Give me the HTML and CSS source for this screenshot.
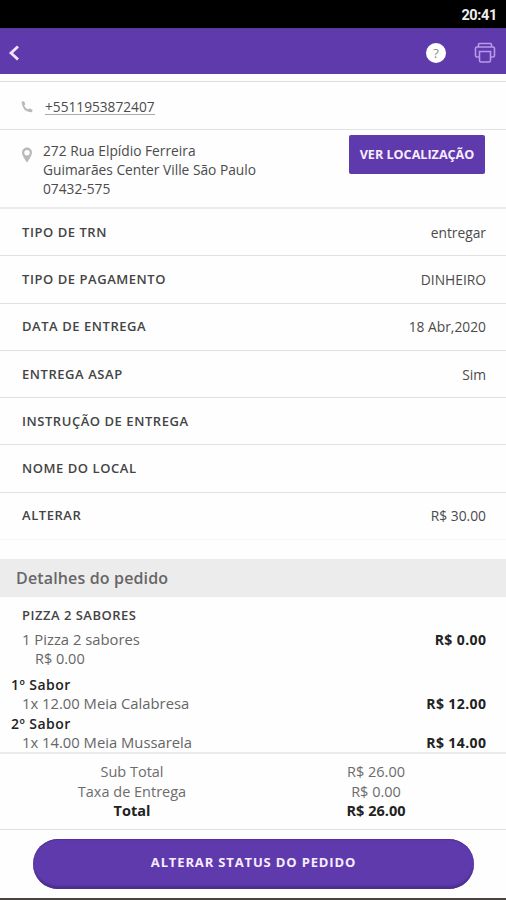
FILE: index.html
```html
<!DOCTYPE html>
<html lang="pt-BR">
<head>
<meta charset="utf-8">
<title>Pedido</title>
<link rel="stylesheet" href="styles.css">
</head>
<body>
<div class="status"><span>20:41</span></div>
<header class="bar">
  <svg class="back" width="13" height="16" viewBox="0 0 13 16"><path d="M11 1.500 4 8l7 6.500"/></svg>
  <div class="actions">
    <span class="help">?</span>
    <svg class="printer" width="22" height="22" viewBox="0 0 22 22"><path d="M4.500 5V2.500Q4.500 1.500 5.500 1.500H16.500Q17.500 1.500 17.500 2.500V5M5.500 15H3Q1.500 15 1.500 13.500V6.500Q1.500 5 3 5H19Q20.500 5 20.500 6.500V13.500Q20.500 15 19 15H16.500M5.500 9.500H16.500V18.500Q16.500 20 15 20H7Q5.500 20 5.500 18.500Z"/></svg>
  </div>
</header>
<div class="gap"></div>
<section class="phone">
  <svg width="12" height="12" viewBox="0 0 12 12"><path d="M.5.8 3 .3l1.400 3-1.300 1.300q1.200 2.600 3.900 4l1.400-1.300 3.200 1.400-.6 2.600Q1.500 11.500.5.800Z"/></svg>
  <a class="number">+5511953872407</a>
</section>
<section class="address">
  <svg width="12" height="16" viewBox="0 0 12 16"><path fill-rule="evenodd" d="M6 .5A5 5 0 0 1 11 5.500C11 9 6 15.500 6 15.500S1 9 1 5.500A5 5 0 0 1 6 .5ZM6 3A2.700 2.700 0 1 0 6 8.400 2.700 2.700 0 1 0 6 3Z"/></svg>
  <div class="lines"><div>272 Rua Elpídio Ferreira</div><div>Guimarães Center Ville São Paulo</div><div>07432-575</div></div>
  <button class="locate">VER LOCALIZAÇÃO</button>
</section>
<dl class="info">
  <div><dt>TIPO DE TRN</dt><dd>entregar</dd></div>
  <div><dt>TIPO DE PAGAMENTO</dt><dd>DINHEIRO</dd></div>
  <div><dt>DATA DE ENTREGA</dt><dd>18 Abr,2020</dd></div>
  <div><dt>ENTREGA ASAP</dt><dd>Sim</dd></div>
  <div><dt>INSTRUÇÃO DE ENTREGA</dt><dd></dd></div>
  <div><dt>NOME DO LOCAL</dt><dd></dd></div>
  <div><dt>ALTERAR</dt><dd>R$ 30.00</dd></div>
</dl>
<h2 class="title">Detalhes do pedido</h2>
<section class="items">
  <h3>PIZZA 2 SABORES</h3>
  <div class="item first"><span>1 Pizza 2 sabores</span><b>R$ 0.00</b></div>
  <div class="unit">R$ 0.00</div>
  <h4>1º Sabor</h4>
  <div class="item"><span>1x 12.00 Meia Calabresa</span><b>R$ 12.00</b></div>
  <h4>2º Sabor</h4>
  <div class="item"><span>1x 14.00 Meia Mussarela</span><b>R$ 14.00</b></div>
</section>
<section class="totals">
  <span>Sub Total</span><span>R$ 26.00</span>
  <span>Taxa de Entrega</span><span>R$ 0.00</span>
  <b>Total</b><b>R$ 26.00</b>
</section>
<footer><button class="change">ALTERAR STATUS DO PEDIDO</button></footer>
</body>
</html>
```

FILE: styles.css
```css
* { box-sizing: border-box; margin: 0; padding: 0; }
body { width: 506px; height: 900px; overflow: hidden; display: flex; flex-direction: column; background: #fefefe; color: #4b4b4b; font: 14px/19px "Open Sans", sans-serif; }
body > * { flex: none; }
button { border: 0; color: #f6edff; font-family: inherit; font-weight: 700; background: #5f3aac; }
.status { height: 28px; padding: 7px 9px 0 0; background: #000; color: #eee; text-align: right; font: 700 14.5px/18px Roboto, sans-serif; letter-spacing: -.35px; }
.bar { height: 46px; padding: 3px 10px 0 7px; display: flex; align-items: center; justify-content: space-between; background: #5f3aac; border-top: 1px solid #54399a; }
.back { fill: none; stroke: #f2e4ff; stroke-width: 2.8; }
.actions { display: flex; align-items: center; gap: 28px; }
.help { width: 20px; height: 20px; border-radius: 50%; background: #fff; color: #8d8995; text-align: center; font-size: 13px; line-height: 20px; }
.printer { fill: none; stroke: #b79be8; stroke-width: 1.6; }
.gap { height: 8px; border-bottom: 1px solid #dfdfda; }
.phone { height: 48px; padding: 3px 0 0 21px; display: flex; align-items: center; gap: 12px; border-bottom: 1px solid #e2e2e2; }
.phone svg, .address svg { fill: #b9b9b9; }
.number { font-size: 13.7px; line-height: 15px; border-bottom: 1px solid #aaa; }
.address { height: 79px; padding: 5px 21px 0; display: flex; border-bottom: 2px solid #ececec; }
.address svg { margin: 12px 10px 0 0; }
.lines { flex: 1; padding-top: 6px; font-size: 13.75px; white-space: nowrap; }
.locate { width: 136px; height: 39px; border-radius: 2px; font-size: 12.6px; white-space: nowrap; }
.info > div { height: 47.3px; padding: 0 20px 0 22px; display: flex; align-items: center; justify-content: space-between; border-bottom: 1px solid #e1e1e1; }
.info > div:last-child { border-color: #f6f6f6; }
dt { font-size: 13px; font-weight: 600; letter-spacing: .55px; color: #444; }
dd { font-size: 13.8px; }
.title { height: 38px; margin-top: 19px; padding-left: 16px; background: #ececec; color: #666; font-size: 16px; line-height: 39px; font-weight: 600; letter-spacing: .15px; }
.items { height: 155px; padding: 9px 20px 0 22px; }
h3 { font-size: 13px; line-height: 19px; font-weight: 600; letter-spacing: .5px; color: #444; }
.item { display: flex; justify-content: space-between; height: 19.5px; font-size: 14.8px; color: #666; }
.item b { color: #222; font-size: 14px; letter-spacing: .4px; margin-right: -.4px; }
.first { margin-top: 5px; }
.unit { padding-left: 13px; font-size: 14.5px; line-height: 18px; padding-bottom: 1px; color: #666; }
h4 { margin-left: -11px; font-size: 14px; line-height: 19.5px; font-weight: 600; letter-spacing: .45px; color: #222; }
.unit + h4 { margin-top: 6px; }
.totals { height: 78px; padding: 8px 8px 0 10px; display: grid; grid-template-columns: 1fr 1fr; align-content: start; justify-items: center; border-top: 2px solid #ebebeb; border-bottom: 1px solid #dfe2dc; font-size: 14.5px; line-height: 19.5px; color: #6c6c6c; }
.totals b { color: #222; }
footer { flex: 1; padding: 9px 32px 9px 33px; border-bottom: 2px solid #49463f; }
.change { display: block; width: 441px; height: 50px; padding-bottom: 5px; border-radius: 25px; font-size: 13px; letter-spacing: .85px; box-shadow: inset 0 -4px 2px -1px #4c2f8f, inset 0 1px 1px #503197; }
```
